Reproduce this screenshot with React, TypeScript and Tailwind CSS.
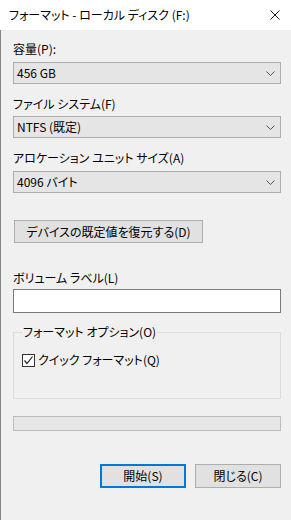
import { ChevronDown } from "lucide-react";

const font = "font-['Yu_Gothic_UI','Noto_Sans_CJK_JP',sans-serif] [font-feature-settings:'palt']";

function Label({ children }: { children: React.ReactNode }) {
  return <div className="h-4 flex items-center leading-4">{children}</div>;
}

function Combo({ value }: { value: string }) {
  return (
    <div className="h-[22px] border border-[#adadad] bg-[#e5e5e5] flex items-center justify-between pl-[3px] pr-[5px]">
      <span>{value}</span>
      <svg width="9" height="5" viewBox="0 0 9 5" className="text-[#555]">
        <path d="M0.5 0.5 L4.5 4.5 L8.5 0.5" fill="none" stroke="currentColor" strokeWidth="1" />
      </svg>
    </div>
  );
}

function Button({ children, primary }: { children: React.ReactNode; primary?: boolean }) {
  return (
    <button
      className={
        primary
          ? "h-6 w-[86px] border-2 border-[#0078d7] bg-[#e1e1e1] flex items-center justify-center"
          : "h-6 w-[86px] border border-[#adadad] bg-[#e1e1e1] flex items-center justify-center"
      }
    >
      {children}
    </button>
  );
}

export default function App() {
  return (
    <div className={`w-[291px] h-[520px] bg-[#f0f0f0] text-[12px] text-black flex flex-col ${font}`}>
      {/* title bar */}
      <div className="h-[30px] bg-white flex items-center justify-between pl-[9px] pr-[11px]">
        <span>フォーマット - ローカル ディスク (F:)</span>
        <svg width="10" height="10" viewBox="0 0 10 10">
          <path d="M0.5 0.5 L9.5 9.5 M9.5 0.5 L0.5 9.5" stroke="#111" strokeWidth="1" />
        </svg>
      </div>

      <div className="flex-1 border-l border-[#858585] pl-[12px] pr-[10px] pt-[11px] flex flex-col">
        <Label>容量(P):</Label>
        <div className="mt-[5px]">
          <Combo value="456 GB" />
        </div>

        <div className="mt-3">
          <Label>ファイル システム(F)</Label>
        </div>
        <div className="mt-1">
          <Combo value="NTFS (既定)" />
        </div>

        <div className="mt-3">
          <Label>アロケーション ユニット サイズ(A)</Label>
        </div>
        <div className="mt-[5px]">
          <Combo value="4096 バイト" />
        </div>

        <button className="mt-[27px] ml-px h-[23px] w-[189px] border border-[#adadad] bg-[#e1e1e1] flex items-center justify-center">
          デバイスの既定値を復元する(D)
        </button>

        <div className="mt-[27px]">
          <Label>ボリューム ラベル(L)</Label>
        </div>
        <input className="mt-[3px] h-6 border border-[#7a7a7a] bg-white outline-none" />

        <fieldset className="mt-[11px] border border-[#dcdcdc] px-[8px] pb-[30px]">
          <legend className="px-px leading-4">フォーマット オプション(O)</legend>
          <label className="mt-[12px] flex items-center gap-[3px]">
            <span className="w-[13px] h-[13px] border border-[#333] bg-white flex items-center justify-center">
              <svg width="11" height="11" viewBox="0 0 11 11">
                <path d="M1.5 5.5 L4 8.5 L9.5 1.5" fill="none" stroke="#222" strokeWidth="1.2" />
              </svg>
            </span>
            <span className="leading-4">クイック フォーマット(Q)</span>
          </label>
        </fieldset>

        <div className="mt-[17px] h-[15px] border border-[#bcbcbc] bg-[#e6e6e6]" />

        <div className="mt-[33px] flex justify-end gap-[9px]">
          <Button primary>開始(S)</Button>
          <Button>閉じる(C)</Button>
        </div>
      </div>
    </div>
  );
}
